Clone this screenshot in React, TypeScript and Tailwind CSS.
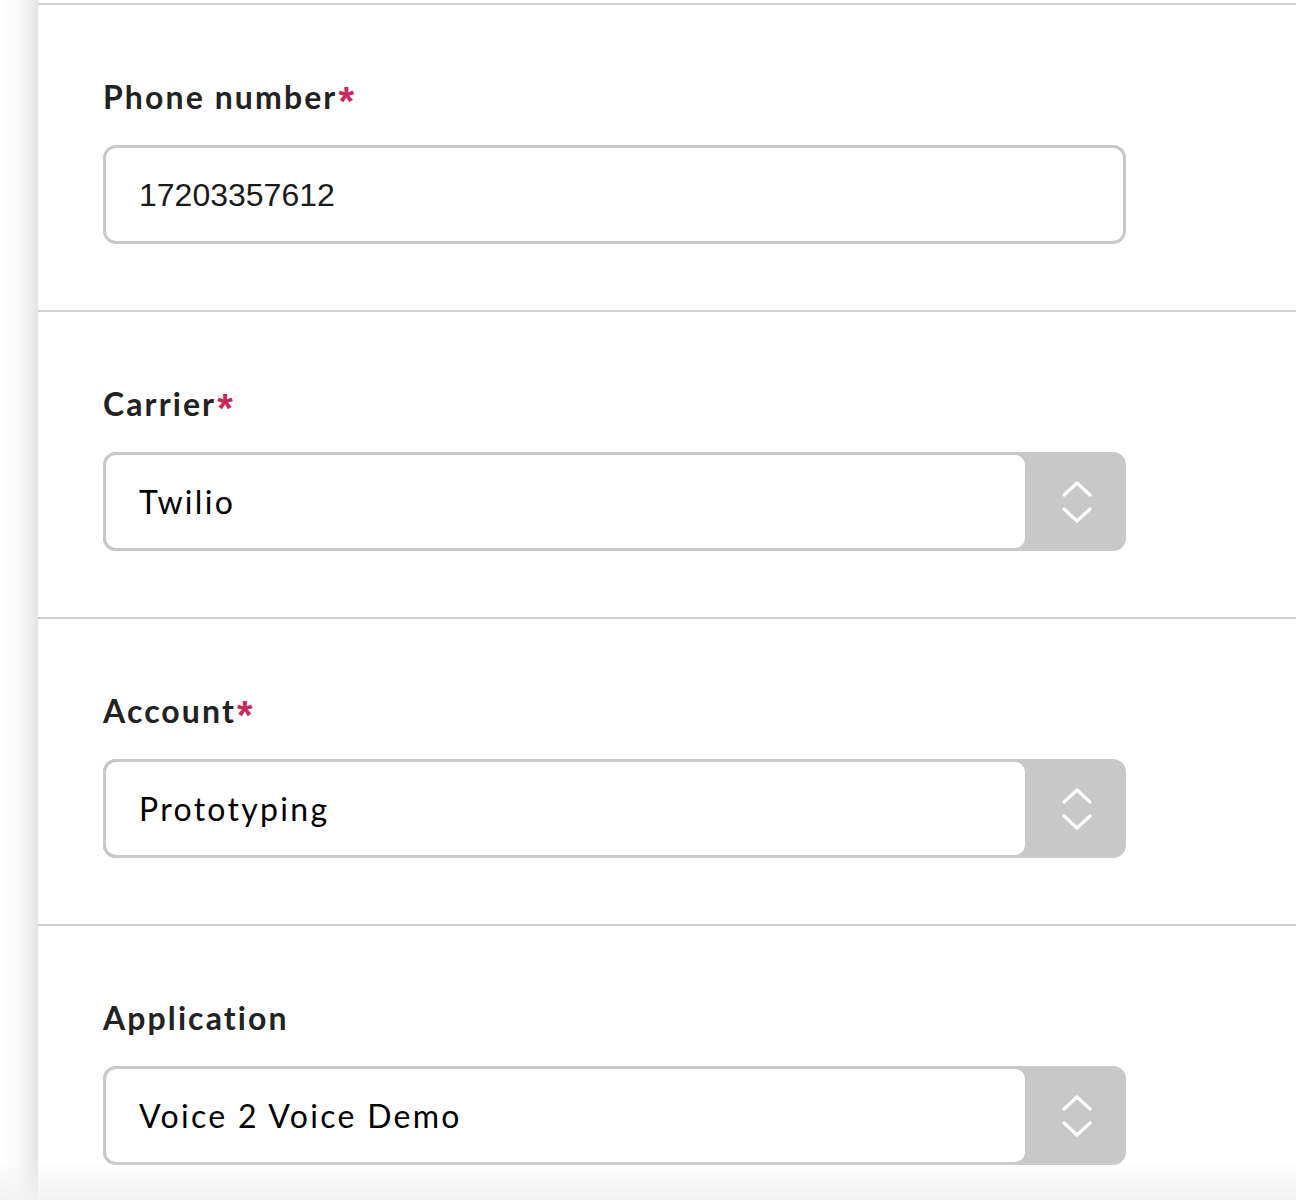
import React from "react";

function Chevrons() {
  return (
    <svg width="30" height="46" viewBox="0 0 30 46" fill="none">
      <path d="M2 16 L15 4 L28 16" stroke="white" strokeWidth="3.2" strokeLinecap="round" strokeLinejoin="round" />
      <path d="M2 30 L15 42 L28 30" stroke="white" strokeWidth="3.2" strokeLinecap="round" strokeLinejoin="round" />
    </svg>
  );
}

function Label({ text, required }: { text: string; required?: boolean }) {
  return (
    <label className="flex items-start text-[32px] leading-[40px] font-bold text-[#222222] font-['Lato',sans-serif] tracking-[2.1px]">
      {text}
      {required && (
        <span className="ml-[1px] text-[#c8285c] font-bold text-[40px] leading-[40px] font-['Liberation_Sans',Arial,sans-serif] translate-y-[4px]">
          *
        </span>
      )}
    </label>
  );
}

function SelectBox({ value }: { value: string }) {
  return (
    <div className="mt-[28px] w-[1023px] h-[99px] flex bg-[#c8c8c8] rounded-[13px]">
      <div className="flex-1 h-full border-[3px] border-[#c8c8c8] bg-white rounded-[13px] flex items-center pl-[33px] text-[32px] text-black font-['Lato',sans-serif] tracking-[2.3px]">
        {value}
      </div>
      <div className="w-[98px] h-full flex items-center justify-center">
        <Chevrons />
      </div>
    </div>
  );
}

export default function App() {
  const selects = [
    { label: "Carrier", value: "Twilio", required: true },
    { label: "Account", value: "Prototyping", required: true },
    { label: "Application", value: "Voice 2 Voice Demo", required: false },
  ];

  return (
    <div className="w-[1296px] h-[1200px] overflow-hidden flex bg-white relative">
      <div className="w-[38px] shrink-0 bg-gradient-to-r from-white via-[#fafafa] to-[#e4e4e4]" />
      <div className="flex-1 pt-[3px]">
        <div className="border-t-2 border-[#cfcfcf] pt-[72px] pb-[66px] pl-[65px]">
          <Label text="Phone number" required />
          <div className="mt-[28px] w-[1023px] h-[99px] border-[3px] border-[#c8c8c8] rounded-[13px] flex items-center pl-[33px] text-[32px] text-[#1a1a1a] font-['Liberation_Sans',Arial,sans-serif]">
            17203357612
          </div>
        </div>
        {selects.map((s) => (
          <div key={s.label} className="border-t-2 border-[#cfcfcf] pt-[72px] pb-[66px] pl-[65px]">
            <Label text={s.label} required={s.required} />
            <SelectBox value={s.value} />
          </div>
        ))}
      </div>
      <div className="absolute left-0 right-0 bottom-0 h-[40px] bg-gradient-to-b from-transparent to-[#f2f2f2] pointer-events-none" />
    </div>
  );
}
